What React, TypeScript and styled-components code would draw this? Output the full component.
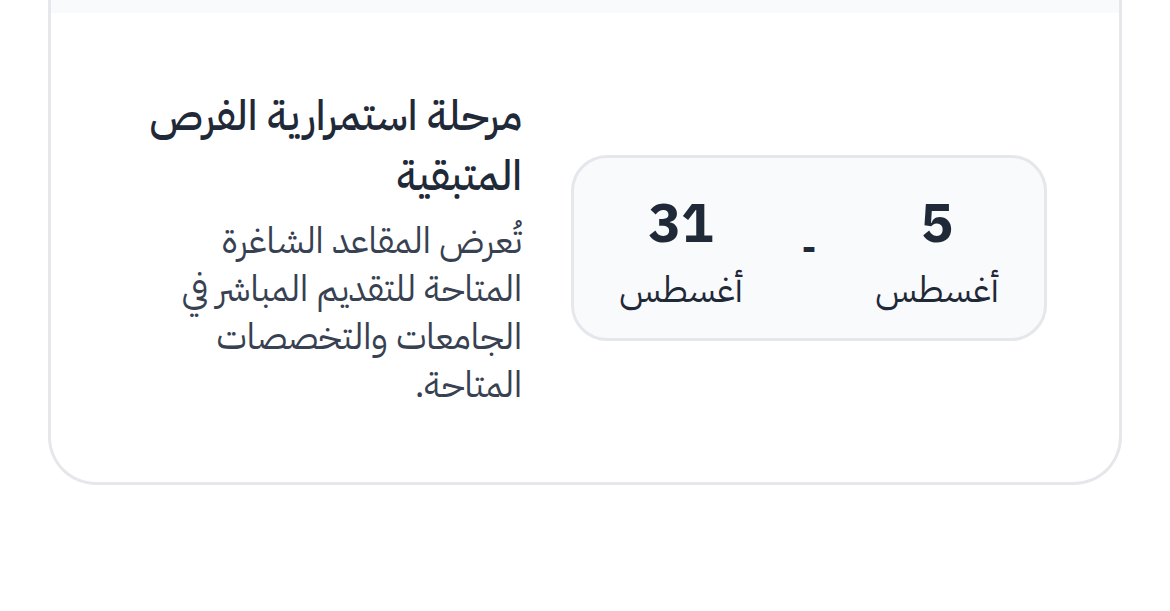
import React from "react";
import styled, { createGlobalStyle } from "styled-components";

const GlobalStyle = createGlobalStyle`
  *, *::before, *::after { box-sizing: border-box; }
  body {
    margin: 0;
    background: #ffffff;
    color: #1f2937;
    font-family: "IBM Plex Sans Arabic", "DejaVu Sans", sans-serif;
  }
`;

const Page = styled.main`
  padding: 0 48px 126px;
`;

const Card = styled.section`
  overflow: hidden;
  border: 3px solid #e5e7eb;
  border-top: 0;
  border-radius: 0 0 48px 48px;
  background: #ffffff;
`;

const CardHeader = styled.div`
  height: 13px;
  background: #f9fafc;
`;

const CardBody = styled.div`
  display: flex;
  align-items: center;
  gap: 49px;
  padding: 73px 72px;
`;

const DateRange = styled.div`
  display: flex;
  align-items: center;
  justify-content: space-between;
  flex: 0 0 476px;
  padding: 24px 45px;
  border: 3px solid #e5e7eb;
  border-radius: 36px;
  background: #f9fafc;
`;

const DateItem = styled.time`
  display: flex;
  flex-direction: column;
  align-items: center;
  width: 124px;
`;

const Day = styled.span`
  font-size: 54px;
  font-weight: 700;
  line-height: 84px;
`;

const Month = styled.span`
  font-size: 36px;
  line-height: 48px;
  white-space: nowrap;
`;

const Dash = styled.span`
  font-size: 36px;
  font-weight: 700;
  line-height: 48px;
`;

const Details = styled.div`
  flex: 1;
  min-width: 0;
  white-space: nowrap;
`;

const Title = styled.h3`
  margin: 0 0 11px;
  font-size: 42px;
  font-weight: 500;
  line-height: 60px;
`;

const Description = styled.p`
  margin: 0;
  color: #374151;
  font-size: 36px;
  line-height: 48px;
`;

function DateBlock({ day, month, value }: { day: number; month: string; value: string }) {
  return (
    <DateItem dateTime={value}>
      <Day>{day}</Day>
      <Month>{month}</Month>
    </DateItem>
  );
}

export default function App() {
  return (
    <Page dir="rtl" lang="ar">
      <GlobalStyle />
      <Card>
        <CardHeader />
        <CardBody>
          <DateRange>
            <DateBlock day={5} month="أغسطس" value="08-05" />
            <Dash>-</Dash>
            <DateBlock day={31} month="أغسطس" value="08-31" />
          </DateRange>
          <Details>
            <Title>
              مرحلة استمرارية الفرص
              <br />
              المتبقية
            </Title>
            <Description>
              تُعرض المقاعد الشاغرة
              <br />
              المتاحة للتقديم المباشر في
              <br />
              الجامعات والتخصصات
              <br />
              المتاحة.
            </Description>
          </Details>
        </CardBody>
      </Card>
    </Page>
  );
}
